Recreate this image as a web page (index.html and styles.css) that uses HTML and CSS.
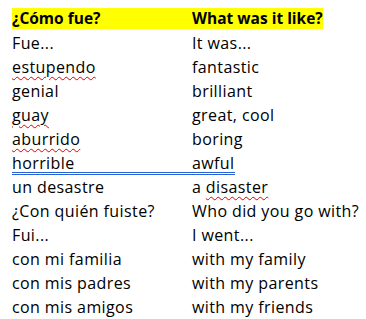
FILE: index.html
```html
<!DOCTYPE html>
<html>
<head>
<meta charset="utf-8">
<link rel="stylesheet" href="styles.css">
</head>
<body>
<div class="sheet">
  <div class="row head">
    <div class="c1">¿Cómo fue?</div>
    <div class="c2">What was it like?</div>
  </div>
  <div class="row first"><div class="c1">Fue...</div><div class="c2">It was...</div></div>
  <div class="row"><div class="c1"><span class="sp">estupendo</span></div><div class="c2">fantastic</div></div>
  <div class="row"><div class="c1">genial</div><div class="c2">brilliant</div></div>
  <div class="row"><div class="c1"><span class="sp">guay</span></div><div class="c2">great, cool</div></div>
  <div class="row"><div class="c1"><span class="sp">aburrido</span></div><div class="c2">boring</div></div>
  <div class="row"><div class="c1 dbl">horrible</div><div class="c2"><span class="dbl2">awful</span></div></div>
  <div class="row"><div class="c1">un desastre</div><div class="c2">a <span class="sp">disaster</span></div></div>
  <div class="row"><div class="c1">¿Con quién fuiste?</div><div class="c2">Who did you go with?</div></div>
  <div class="row"><div class="c1">Fui...</div><div class="c2">I went...</div></div>
  <div class="row"><div class="c1">con mi familia</div><div class="c2">with my family</div></div>
  <div class="row"><div class="c1">con mis padres</div><div class="c2">with my parents</div></div>
  <div class="row"><div class="c1">con mis amigos</div><div class="c2">with my friends</div></div>
</div>
</body>
</html>
```
FILE: styles.css
```css
html, body {
  margin: 0;
  padding: 0;
  background: #fff;
}
.sheet {
  padding: 8px 0 0 12px;
  font-family: "Open Sans", sans-serif;
  font-size: 16px;
  letter-spacing: 0.4px;
  color: #000;
}
.row {
  display: flex;
  height: 24px;
  line-height: 24px;
}
.row.head {
  height: 21px;
  line-height: 21px;
  width: 311px;
  background: #ffff00;
  font-weight: bold;
  font-size: 15.5px;
  letter-spacing: 0;
}
.row.first {
  margin-top: 2px;
}
.c1 {
  width: 171px;
  white-space: nowrap;
}
.c2 {
  padding-left: 9px;
  white-space: nowrap;
}
.sp {
  text-decoration: underline wavy #e00000;
  text-decoration-thickness: 1px;
  text-underline-offset: 3px;
}
.dbl {
  height: 21px;
  border-bottom: 3px double #2a62d6;
}
.dbl2 {
  display: inline-block;
  height: 21px;
  margin-left: -9px;
  padding-left: 9px;
  border-bottom: 3px double #2a62d6;
}
```
